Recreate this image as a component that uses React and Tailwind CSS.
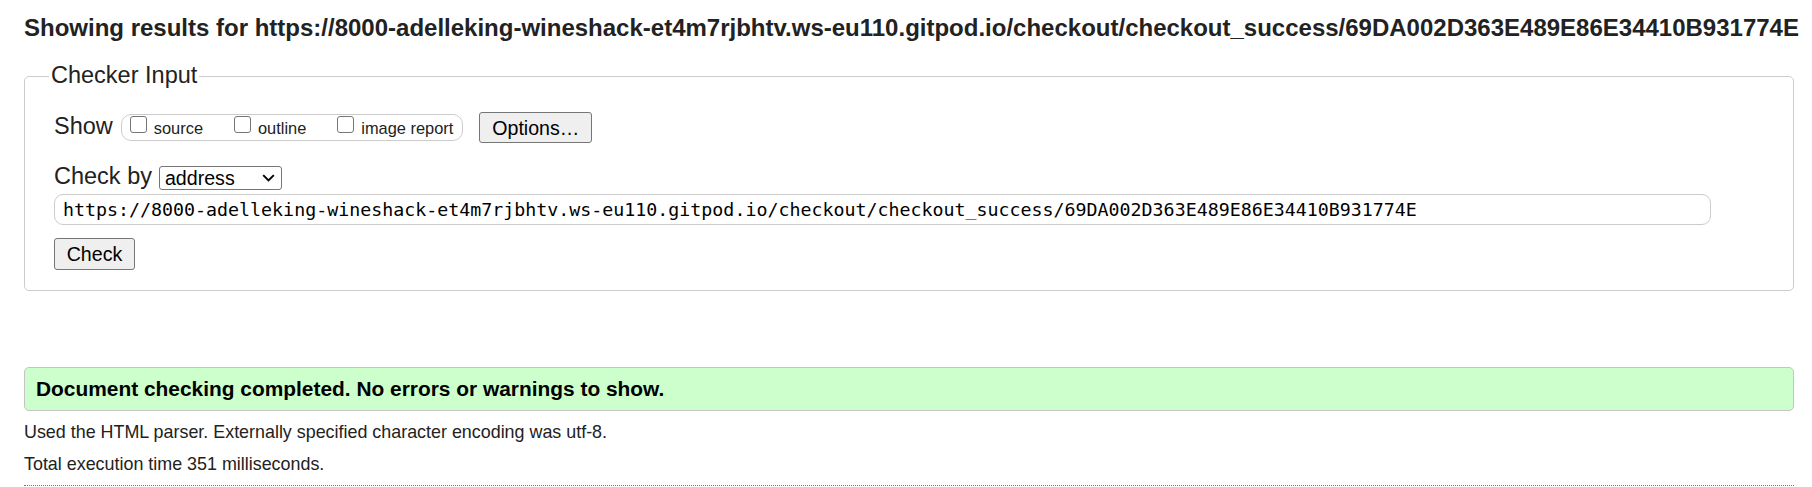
import React from "react";

const sans = { fontFamily: '"Liberation Sans", Arial, sans-serif' };

function Box() {
  return (
    <span className="mb-[6px] inline-block h-[17px] w-[17px] shrink-0 rounded-[3px] border border-[#767676] bg-white" />
  );
}

function CheckItem({ label }) {
  return (
    <span className="flex items-center">
      <Box />
      <span className="ml-[7px] text-[16.4px] leading-[20px] text-[#222]">{label}</span>
    </span>
  );
}

export default function App() {
  const url =
    "https://8000-adelleking-wineshack-et4m7rjbhtv.ws-eu110.gitpod.io/checkout/checkout_success/69DA002D363E489E86E34410B931774E";
  return (
    <div className="min-h-[487px] bg-white pl-[24px] pr-[18px] pt-[14px] text-[#222]" style={sans}>
      <h2 className="h-[28px] whitespace-nowrap text-[24px] font-bold leading-[28px] text-[#222]">
        Showing results for {url}
      </h2>

      <fieldset className="mt-[20px] rounded-[5px] border border-[#cccccc] px-[24px] pb-[20px] pt-[22px]">
        <legend className="px-[2px] pb-[2px] text-[23.5px] leading-[26px] text-[#222]">Checker Input</legend>
        <div className="pl-[5px]">
          <div className="flex h-[31px] items-start">
            <span className="mt-[1px] text-[23.5px] leading-[26px]">Show</span>
            <div className="ml-[8px] mt-[2px] flex h-[27px] items-center gap-[31px] rounded-[10px] border border-[#cccccc] pl-[8px] pr-[9px]">
              <CheckItem label="source" />
              <CheckItem label="outline" />
              <CheckItem label="image report" />
            </div>
            <button className="ml-[16px] flex h-[31px] w-[113px] items-center justify-center rounded-[3px] border border-[#767676] bg-[#efefef] text-[19.6px] leading-[24px] text-black">
              Options…
            </button>
          </div>

          <div className="mt-[20px] flex h-[27px] items-start">
            <span className="text-[23.5px] leading-[26px]">Check by</span>
            <div className="ml-[7px] mt-[3px] flex h-[24px] w-[123px] items-center justify-between rounded-[3px] border border-[#767676] bg-white pl-[5px] pr-[6px]">
              <span className="text-[19.6px] leading-[22px] text-black">address</span>
              <svg width="13" height="8" viewBox="0 0 13 8" className="mb-[1px]">
                <polyline points="1.2,1.2 6.5,6.5 11.8,1.2" fill="none" stroke="#000" strokeWidth="1.9" />
              </svg>
            </div>
          </div>

          <div className="mt-[4px] flex h-[31px] w-[1657px] items-center rounded-[9px] border border-[#cccccc] bg-white pl-[8px]">
            <span
              className="whitespace-nowrap text-[18.3px] leading-[22px] text-black"
              style={{ fontFamily: '"DejaVu Sans Mono", "Liberation Mono", monospace' }}
            >
              {url}
            </span>
          </div>

          <button className="mt-[13px] flex h-[32px] w-[81px] items-center justify-center rounded-[3px] border border-[#767676] bg-[#efefef] text-[19.6px] leading-[24px] text-black">
            Check
          </button>
        </div>
      </fieldset>

      <div className="mt-[76px] flex h-[44px] items-center rounded-[5px] border border-[#c4c4c4] bg-[#ccffcc] pl-[11px]">
        <span className="text-[20.9px] font-bold leading-[26px] text-black">
          Document checking completed. No errors or warnings to show.
        </span>
      </div>

      <p className="mt-[10px] text-[17.9px] leading-[22px] text-[#222]">
        Used the HTML parser. Externally specified character encoding was utf-8.
      </p>
      <p className="mt-[10px] text-[17.9px] leading-[22px] text-[#222]">Total execution time 351 milliseconds.</p>
      <div className="mt-[10px] border-t border-dotted border-[#777]" />
    </div>
  );
}
